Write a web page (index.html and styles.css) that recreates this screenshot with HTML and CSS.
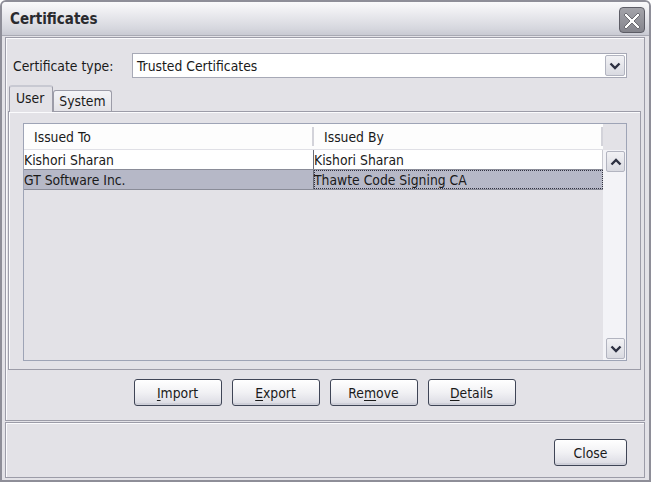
FILE: index.html
```html
<!DOCTYPE html>
<html>
<head>
<meta charset="utf-8">
<link rel="stylesheet" href="styles.css">
</head>
<body>
<div class="window">
  <div class="titlebar">
    <span class="title">Certificates</span>
    <div class="close-x">
      <svg width="26" height="26" viewBox="0 0 26 26">
        <path d="M7 6 L13 12 L19 6 L21 8 L15 14 L21 20 L19 22 L13 16 L7 22 L5 20 L11 14 L5 8 Z" fill="#fff" stroke="#55555c" stroke-width="0.8"/>
      </svg>
    </div>
  </div>
  <div class="main">
    <div class="type-row">
      <span class="label">Certificate type:</span>
      <div class="combo">
        <span class="combo-text">Trusted Certificates</span>
        <div class="combo-btn">
          <svg width="12" height="8" viewBox="0 0 12 8"><path d="M1.5 1.5 L6 6 L10.5 1.5" fill="none" stroke="#2d3142" stroke-width="2.4"/></svg>
        </div>
      </div>
    </div>
    <div class="tabs">
      <div class="tab active">User</div>
      <div class="tab">System</div>
    </div>
    <div class="tabpanel">
      <div class="scrollpane">
        <div class="table">
          <div class="thead">
            <div class="th">Issued To</div>
            <div class="th">Issued By</div>
          </div>
          <div class="tbody">
            <div class="tr">
              <div class="td">Kishori Sharan</div>
              <div class="td">Kishori Sharan</div>
            </div>
            <div class="tr selected">
              <div class="td">GT Software Inc.</div>
              <div class="td focus">Thawte Code Signing CA</div>
            </div>
          </div>
        </div>
        <div class="vscroll">
          <div class="corner"></div>
          <div class="track">
            <div class="sbtn">
              <svg width="12" height="8" viewBox="0 0 12 8"><path d="M1.5 6.5 L6 2 L10.5 6.5" fill="none" stroke="#2d3142" stroke-width="2.4"/></svg>
            </div>
            <div class="sbtn">
              <svg width="12" height="8" viewBox="0 0 12 8"><path d="M1.5 1.5 L6 6 L10.5 1.5" fill="none" stroke="#2d3142" stroke-width="2.4"/></svg>
            </div>
          </div>
        </div>
      </div>
    </div>
    <div class="actions">
      <div class="btn"><u>I</u>mport</div>
      <div class="btn"><u>E</u>xport</div>
      <div class="btn">Re<u>m</u>ove</div>
      <div class="btn"><u>D</u>etails</div>
    </div>
  </div>
  <div class="footer">
    <div class="btn close-btn">Close</div>
  </div>
</div>
</body>
</html>
```

FILE: styles.css
```css
* { box-sizing: border-box; }
html, body { margin: 0; padding: 0; background: #ffffff; }
body {
  font-family: "DejaVu Sans Condensed", "DejaVu Sans", "Liberation Sans", sans-serif;
  font-size: 13.8px;
  color: #1a1a1a;
}
.window {
  width: 651px;
  height: 482px;
  border: 2px solid #8e8e98;
  border-radius: 6px 6px 0 0;
  background: #e3e2e7;
  display: flex;
  flex-direction: column;
  padding: 0 4px 2px 3px;
}
.titlebar {
  height: 34px;
  margin: 0 -4px 0 -3px;
  padding: 0 4px 0 8px;
  display: flex;
  align-items: center;
  justify-content: space-between;
  background: linear-gradient(#fafafb 0%, #ebebef 35%, #d6d7de 80%, #c9cad3 100%);
  border-bottom: 1px solid #a9aab4;
  border-radius: 4px 4px 0 0;
}
.title {
  font-weight: bold;
  font-size: 15px;
  color: #2a2a2e;
  margin-top: 1px;
}
.close-x {
  width: 26px;
  height: 26px;
  margin-top: 3px;
  border: 1px solid #5d5d66;
  border-radius: 4px;
  background: linear-gradient(#a4a4aa, #85858d);
  display: flex;
  align-items: center;
  justify-content: center;
}
.close-x svg { margin: -1px; }
.main {
  height: 384px;
  margin-top: 1px;
  border: 1px solid #9c9ca8;
  box-shadow: inset 1px 1px 0 #fbfbfd;
  display: flex;
  flex-direction: column;
  padding: 15px 3px 0 2px;
}
.type-row {
  display: flex;
  align-items: center;
  height: 25px;
  padding-left: 5px;
}
.label { width: 119px; }
.combo {
  width: 495px;
  height: 25px;
  background: #fff;
  border: 1px solid #a7a9b6;
  display: flex;
  align-items: center;
  justify-content: space-between;
  padding: 0 1px 0 4px;
}
.combo-btn, .sbtn {
  width: 20px;
  height: 21px;
  border: 1px solid #b2b4c0;
  border-radius: 2px;
  background: linear-gradient(#f2f2f5, #d9dae1);
  display: flex;
  align-items: center;
  justify-content: center;
}
.tabs {
  display: flex;
  align-items: flex-end;
  height: 26px;
  margin-top: 7px;
  padding-left: 1px;
}
.tab {
  height: 21px;
  padding: 0 5px;
  border: 1px solid #9c9ca8;
  border-bottom: none;
  border-radius: 3px 3px 0 0;
  background: linear-gradient(#f4f4f7, #e3e2e7);
  display: flex;
  align-items: center;
}
.tab.active {
  padding: 0 8px 3px 6px;
  background: #e3e2e7;
  border-top: 2px solid #c8c9d2;
  position: relative;
  z-index: 1;
  margin-bottom: -1px;
  height: 27px;
}
.tabpanel {
  height: 259px;
  border: 1px solid #9c9ca8;
  box-shadow: inset 1px 1px 0 #fbfbfd;
  padding: 11px 13px 8px 14px;
  display: flex;
}
.scrollpane {
  flex: 1;
  border: 1px solid #9ea4b6;
  display: flex;
  background: #e3e2e7;
}
.table {
  flex: 1;
  display: flex;
  flex-direction: column;
}
.thead {
  display: flex;
  height: 26px;
  background: #fdfdfd;
  border-bottom: 1px solid #e0e0e6;
}
.th {
  flex: 0 0 290px;
  display: flex;
  align-items: center;
  padding-left: 10px;
  border-right: 2px solid #d3d3da;
  margin: 3px 0;
}
.th + .th { flex: 0 0 289px; }
.tr {
  display: flex;
  height: 20px;
  background: #fff;
  border-bottom: 1px solid #8a8c98;
}
.td {
  flex: 0 0 290px;
  display: flex;
  align-items: center;
  border-right: 1px solid #6a6c78;
  white-space: nowrap;
}
.td + .td { flex: 0 0 289px; border-right: 1px solid #c8c9d0; }
.tr.selected { background: #b6b8c7; }
.td.focus { outline: 1px dotted #303040; outline-offset: -1px; }
.vscroll {
  width: 23px;
  display: flex;
  flex-direction: column;
}
.corner {
  height: 26px;
  background: #e3e2e7;
}
.track {
  flex: 1;
  background: #f3f3f7;
  display: flex;
  flex-direction: column;
  justify-content: space-between;
  padding: 1px 0 1px 3px;
}
.sbtn { width: 19px; height: 21px; }
.actions {
  display: flex;
  justify-content: center;
  gap: 10px;
  margin-top: 9px;
}
.btn {
  width: 88px;
  height: 27px;
  border: 1px solid #3f4556;
  border-radius: 3px;
  background: linear-gradient(#ffffff 0%, #f1f1f4 50%, #dadae2 100%);
  display: flex;
  align-items: center;
  justify-content: center;
  box-shadow: inset 0 -2px 0 #cfd0d9;
}
.btn u { text-decoration-thickness: 1px; text-underline-offset: 2px; }
.footer {
  flex: 1;
  margin-top: 1px;
  border: 1px solid #9c9ca8;
  box-shadow: inset 1px 1px 0 #fbfbfd;
  display: flex;
  justify-content: flex-end;
  padding: 16px 17px 0 0;
}
.close-btn { width: 73px; }
```
